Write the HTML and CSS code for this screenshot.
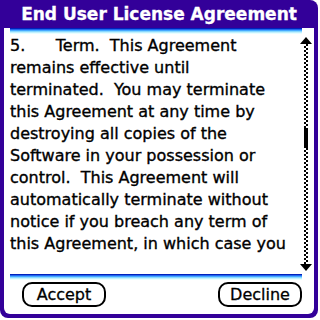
FILE: index.html
```html
<!DOCTYPE html>
<html lang="en">
<head>
  <meta charset="UTF-8">
  <title>End User License Agreement</title>
  <link rel="stylesheet" href="styles.css">
</head>
<body>

<div class="window">
  <div class="title-bar">End User License Agreement</div>
  <div class="panel">
    <div class="rule"></div>
    <div class="content">
      <div class="eula-text">
        <div class="line">5.      Term.  This Agreement</div>
        <div class="line">remains effective until</div>
        <div class="line">terminated.  You may terminate</div>
        <div class="line">this Agreement at any time by</div>
        <div class="line">destroying all copies of the</div>
        <div class="line">Software in your possession or</div>
        <div class="line">control.  This Agreement will</div>
        <div class="line">automatically terminate without</div>
        <div class="line">notice if you breach any term of</div>
        <div class="line">this Agreement, in which case you</div>
      </div>
      <div class="scrollbar">
        <div class="arrow up"></div>
        <div class="track">
          <div class="thumb"></div>
        </div>
        <div class="arrow down"></div>
      </div>
    </div>
    <div class="rule"></div>
    <div class="buttons">
      <button class="btn">Accept</button>
      <button class="btn">Decline</button>
    </div>
  </div>
</div>

</body>
</html>
```

FILE: styles.css
```css
html, body {
  margin: 0;
  padding: 0;
  width: 320px;
  height: 320px;
  background-color: #fff;
  font-family: "DejaVu Sans", sans-serif;
  overflow: hidden;
}

.window {
  width: 318px;
  height: 318px;
  background-color: #330099;
  border-radius: 0 8px 8px 8px;
  display: flex;
  flex-direction: column;
}

.title-bar {
  height: 28px;
  display: flex;
  justify-content: center;
  align-items: center;
  color: #fff;
  font-weight: bold;
  font-size: 17px;
  -webkit-text-stroke: 0.3px #fff;
}

.panel {
  flex: 1;
  margin: 0 4px 4px 4px;
  background-color: #fff;
  border-radius: 0 0 6px 6px;
  display: flex;
  flex-direction: column;
}

.rule {
  margin-left: 6px;
  width: 292px;
  height: 6px;
  flex-shrink: 0;
  background: linear-gradient(#0022bb 0 1px, #2266ee 1px 2px, #44a8ff 2px 3px, #88d8ff 3px 4px, #c0f0ff 4px 5px, #e8ffff 5px);
}

.content {
  display: flex;
  height: 240px;
  overflow: hidden;
}

.eula-text {
  flex: 1;
  padding: 1px 0 0 6px;
  font-size: 16px;
  line-height: 22px;
  color: #000;
  -webkit-text-stroke: 0.35px #000;
}

.line {
  white-space: pre;
}

.scrollbar {
  width: 14px;
  margin: 3px 1px 0 0;
  display: flex;
  flex-direction: column;
  align-items: center;
  height: 234px;
}

.arrow {
  width: 0;
  height: 0;
  border-left: 6px solid transparent;
  border-right: 6px solid transparent;
}

.arrow.up {
  border-bottom: 7px solid #000;
}

.arrow.down {
  border-top: 7px solid #000;
}

.track {
  flex: 1;
  width: 4px;
  background-image: conic-gradient(#000 25%, #fff 0 50%, #000 0 75%, #fff 0);
  background-size: 4px 4px;
  display: flex;
  justify-content: center;
  padding-top: 84px;
}

.thumb {
  width: 6px;
  height: 20px;
  background-color: #000;
}

.buttons {
  display: flex;
  justify-content: space-between;
  padding: 2px 12px 0 18px;
}

.btn {
  width: 84px;
  height: 25px;
  border: 2px solid #000;
  border-radius: 10px;
  background-color: #fff;
  color: #000;
  font-family: "DejaVu Sans", sans-serif;
  font-size: 16px;
  -webkit-text-stroke: 0.3px #000;
  padding: 0;
}
```
